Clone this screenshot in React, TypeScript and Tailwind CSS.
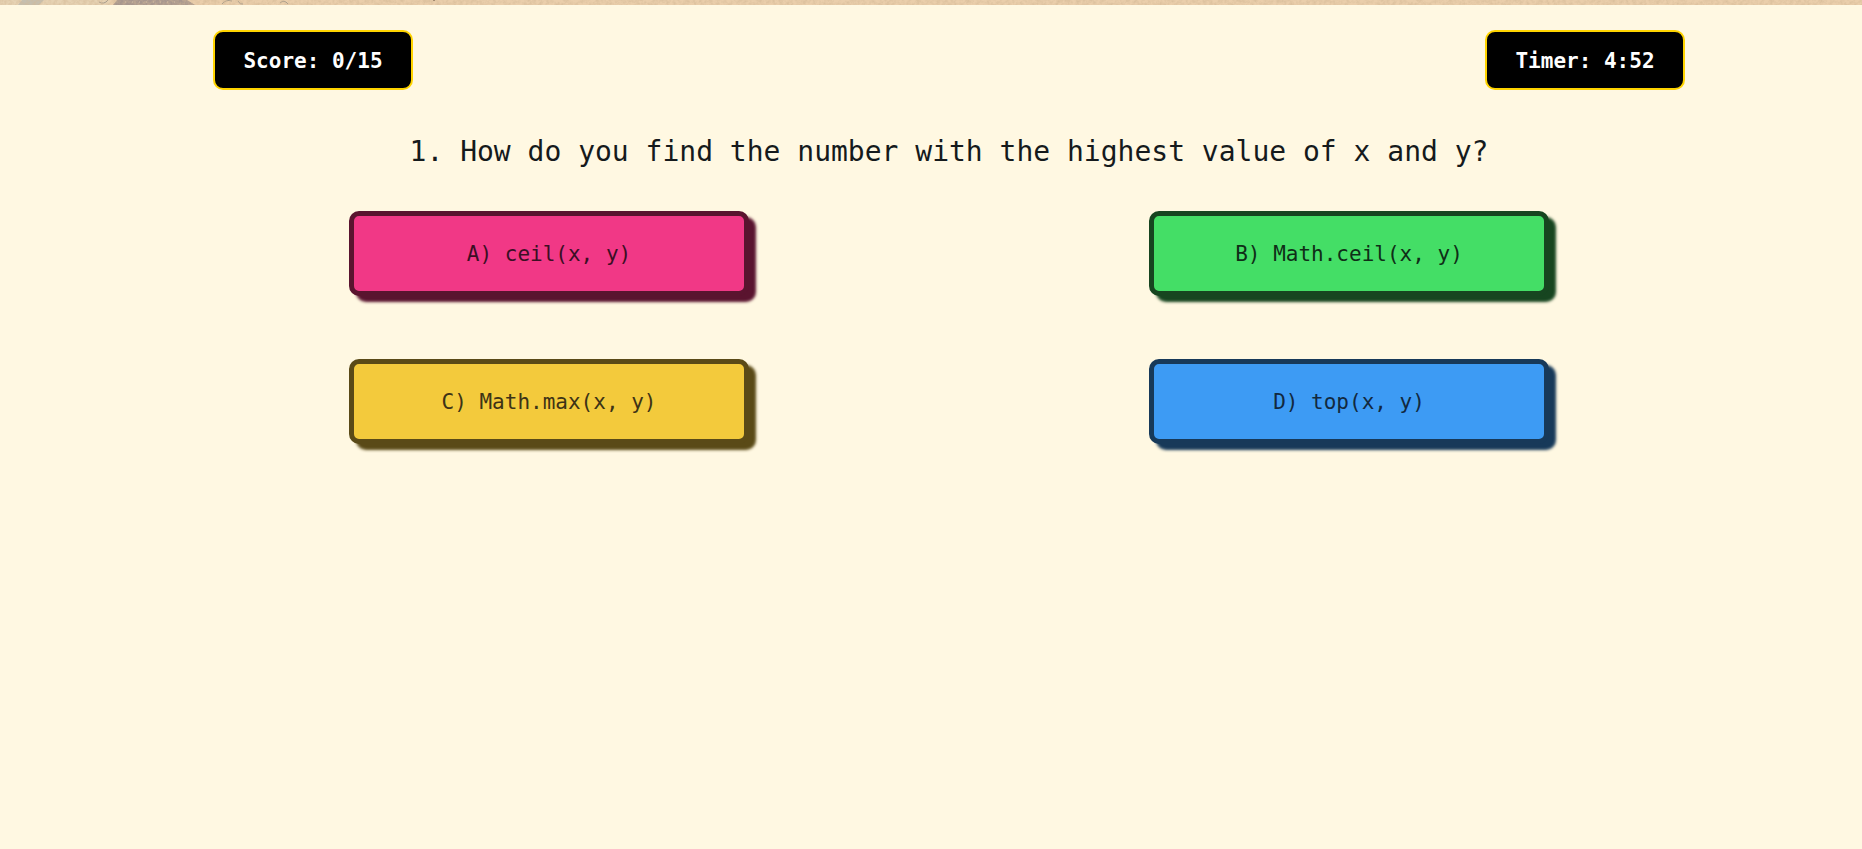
const answers = [
  { label: "A) ceil(x, y)", tone: "bg-[#f13886] border-[#5a142f] text-[#3b0f24] shadow-[7px_6px_3px_#5a142f]" },
  { label: "B) Math.ceil(x, y)", tone: "bg-[#44de66] border-[#174520] text-[#0f2e17] shadow-[7px_6px_3px_#174520]" },
  { label: "C) Math.max(x, y)", tone: "bg-[#f3ca3c] border-[#5a4a17] text-[#3d3316] shadow-[7px_6px_3px_#5a4a17]" },
  { label: "D) top(x, y)", tone: "bg-[#3d9bf4] border-[#173959] text-[#12293f] shadow-[7px_6px_3px_#173959]" },
];

function Badge({ children }: { children: string }) {
  return (
    <div className="flex h-15 w-50 items-center justify-center rounded-[10px] border-2 border-[#ffd400] bg-black pt-1 text-[21px] font-bold text-white">
      {children}
    </div>
  );
}

function SandStrip() {
  return (
    <svg className="block h-[5px] w-full bg-[#eaceab]" aria-hidden="true">
      <filter id="grain">
        <feTurbulence type="fractalNoise" baseFrequency="0.3" numOctaves="3" />
        <feColorMatrix values="0 0 0 0 0.65  0 0 0 0 0.48  0 0 0 0 0.3  1.2 0 0 0 -0.4" />
      </filter>
      <rect width="110" height="5" fill="#e6d2b3" />
      <path d="M22 0h22l-5 5H18z" fill="#c5bfb0" />
      <path d="M99 2q5 3 9-2M222 4q4-5 10-3M238 1q2 4 5 3M280 3q4-4 8 1" fill="none" stroke="#a59b8c" />
      <path d="M117 0h70l8 5h-82z" fill="#a8978e" />
      <path d="M125 2h55" stroke="#d1bda9" strokeDasharray="1 6" />
      <rect width="100%" height="5" filter="url(#grain)" />
      <path d="M433 0h2" stroke="#67513f" />
    </svg>
  );
}

export default function App() {
  return (
    <div className="min-h-screen bg-[#fff8e2] font-['DejaVu_Sans_Mono',monospace]">
      <SandStrip />
      <main className="pt-[25px] pl-9">
        <header className="mx-auto flex max-w-[1472px] justify-between">
          <Badge>Score: 0/15</Badge>
          <Badge>Timer: 4:52</Badge>
        </header>
        <h1 className="mt-11 text-center text-[28px] leading-9 text-[#151a1c]">
          1. How do you find the number with the highest value of x and y?
        </h1>
        <div className="mx-auto mt-[41px] grid max-w-[1600px] grid-cols-2 justify-items-center gap-y-[63px]">
          {answers.map(({ label, tone }) => (
            <button
              key={label}
              type="button"
              className={`h-[85px] w-full max-w-[400px] cursor-pointer rounded-[10px] border-5 pt-0.5 text-[21px] ${tone}`}
            >
              {label}
            </button>
          ))}
        </div>
      </main>
    </div>
  );
}
